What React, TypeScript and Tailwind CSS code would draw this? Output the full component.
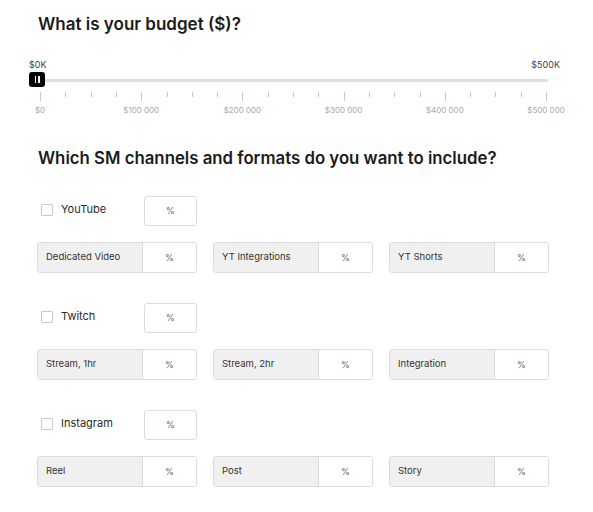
import React from 'react';

const ticks = Array.from({ length: 21 }, (_, i) => i);
const tickLabels = ['$0', '$100 000', '$200 000', '$300 000', '$400 000', '$500 000'];

const channels = [
  { name: 'YouTube', formats: ['Dedicated Video', 'YT Integrations', 'YT Shorts'] },
  { name: 'Twitch', formats: ['Stream, 1hr', 'Stream, 2hr', 'Integration'] },
  { name: 'Instagram', formats: ['Reel', 'Post', 'Story'] },
];

function PctBox() {
  return (
    <div className="w-[53px] h-[30px] border border-[#dcdcdc] rounded-[3px] bg-white flex items-center justify-center text-[9px] text-[#666]">
      %
    </div>
  );
}

function FormatCell({ label }: { label: string }) {
  return (
    <div className="w-[160px] h-[31px] flex border border-[#dcdcdc] rounded-[3px] overflow-hidden">
      <div className="w-[105px] bg-[#f0f0f0] border-r border-[#dcdcdc] flex items-center pl-[8px] text-[9.5px] text-[#333]">
        {label}
      </div>
      <div className="flex-1 bg-white flex items-center justify-center text-[9px] text-[#666]">%</div>
    </div>
  );
}

export default function App() {
  return (
    <div className="w-[593px] h-[512px] bg-white overflow-hidden" style={{ fontFamily: 'Inter, "Noto Sans", sans-serif' }}>
      <h1 className="pl-[38px] pt-[13px] text-[17px] leading-[22px] font-semibold text-[#1b1b1b]">What is your budget ($)?</h1>

      {/* Slider */}
      <div className="pl-[29px] pr-[33px] mt-[24px]">
        <div className="flex justify-between text-[9px] leading-[12px] text-[#444]">
          <span>$0K</span>
          <span>$500K</span>
        </div>
        <div className="relative h-[16px] mt-[1px] flex items-center">
          <div className="w-[519px] h-[3px] bg-[#dedede] rounded-full" />
          <div className="absolute left-0 top-0 w-[16px] h-[15px] bg-black rounded-[3px] flex items-center justify-center gap-[2px]">
            <div className="w-[1.5px] h-[7px] bg-white" />
            <div className="w-[1.5px] h-[7px] bg-white" />
          </div>
        </div>
        <div className="relative ml-[11px] w-[506px] h-[13px] mt-[4px]">
          {ticks.map((i) => (
            <div
              key={i}
              className={`absolute top-0 w-px bg-[#c8c8c8] ${i % 4 === 0 ? 'h-[9px]' : 'h-[5px]'}`}
              style={{ left: `${(i / 20) * 100}%` }}
            />
          ))}
        </div>
        <div className="relative ml-[11px] w-[506px] h-[12px]">
          {tickLabels.map((t, i) => (
            <span
              key={t}
              className="absolute top-0 -translate-x-1/2 text-[8px] leading-[10px] text-[#a8a8a8] whitespace-nowrap"
              style={{ left: `${(i / 5) * 100}%` }}
            >
              {t}
            </span>
          ))}
        </div>
      </div>

      <h2 className="pl-[38px] mt-[30px] text-[16.8px] leading-[22px] font-semibold text-[#1b1b1b]">
        Which SM channels and formats do you want to include?
      </h2>

      <div className="pl-[37px] mt-[27px] flex flex-col gap-[30px]">
        {channels.map((c) => (
          <div key={c.name} className="flex flex-col gap-[16px]">
            <div className="flex items-start">
              <div className="w-[107px] flex items-center pl-[4px] pt-[8px]">
                <div className="w-[12px] h-[12px] border border-[#c8c8c8] rounded-[1px] bg-white" />
                <span className="ml-[8px] text-[11px] leading-[12px] text-[#2a2a2a] -mt-[2px]">{c.name}</span>
              </div>
              <PctBox />
            </div>
            <div className="flex gap-[16px]">
              {c.formats.map((f) => (
                <FormatCell key={f} label={f} />
              ))}
            </div>
          </div>
        ))}
      </div>
    </div>
  );
}
